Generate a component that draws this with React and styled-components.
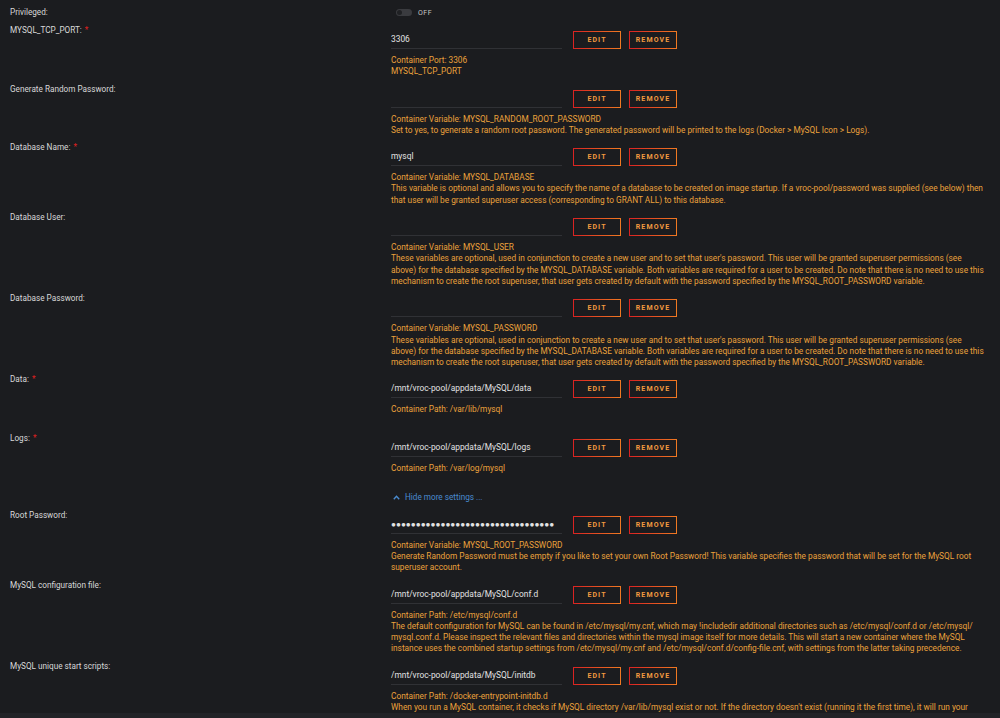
import React from 'react';
import styled, { createGlobalStyle } from 'styled-components';

const GlobalStyle = createGlobalStyle`
    html, body {
        margin: 0;
        padding: 0;
        background: #1b1c1f;
    }
    body {
        font-family: Roboto, "Liberation Sans", Arial, sans-serif;
        font-size: 8.2px;
        color: #d4d4d4;
    }
`

const Page = styled.div`
    padding: 7px 10px 20px 10px;
`

const Row = styled.div`
    display: grid;
    grid-template-columns: 381px 1fr;
    margin-bottom: ${props => props.$gap || 6}px;
`

const Label = styled.div`
    line-height: 11px;
    color: #d8d8d8;
    padding-right: 10px;
`

const Required = styled.span`
    color: #e02020;
    margin-left: 3px;
`

const Value = styled.div`
    display: flex;
    flex-direction: column;
`

const Controls = styled.div`
    display: flex;
    align-items: center;
    margin-top: 6px;
    height: 18px;
`

const Field = styled.div`
    box-sizing: border-box;
    width: 171px;
    height: 18px;
    line-height: 16px;
    border-bottom: 1px solid #303135;
    color: #e2e2e2;
    font-size: ${props => props.$secret ? '8.2px' : '8.4px'};
    white-space: nowrap;
    overflow: hidden;
    margin-right: 11px;
`

const Button = styled.button`
    box-sizing: border-box;
    width: 48px;
    height: 18px;
    margin-right: 8px;
    padding: 0;
    background: transparent;
    border: 1px solid;
    border-image: linear-gradient(90deg, #d92222 0%, #f07a22 100%) 1;
    color: #f29a40;
    font-family: Roboto, "Liberation Sans", Arial, sans-serif;
    font-size: 7px;
    font-weight: bold;
    letter-spacing: 1.1px;
    text-transform: uppercase;
    cursor: pointer;
`

const Description = styled.div`
    margin-top: 6px;
    line-height: 11.3px;
    font-size: 8.3px;
    color: #eba23c;
    white-space: nowrap;
    min-height: 22.6px;
`

const Toggle = styled.div`
    display: flex;
    align-items: center;
    height: 11px;
    padding-left: 5px;
`

const Switch = styled.div`
    position: relative;
    width: 16px;
    height: 7px;
    border-radius: 4px;
    background: #3a3b3f;
    margin-right: 6px;

    &::after {
        content: '';
        position: absolute;
        left: 1px;
        top: 1px;
        width: 5px;
        height: 5px;
        border-radius: 50%;
        background: #202124;
    }
`

const ToggleText = styled.span`
    font-size: 7px;
    color: #c8c8c8;
    letter-spacing: 0.5px;
`

const MoreLink = styled.div`
    display: flex;
    align-items: center;
    gap: 5px;
    line-height: 11px;
    padding-left: 2px;
    color: #4a8bd0;
    margin-bottom: 1px;
`

const Footer = styled.div`
    position: fixed;
    left: 0;
    right: 0;
    bottom: 0;
    height: 5px;
    background: #222327;
`

const ChevronUp = () => (
    <svg width="7" height="5" viewBox="0 0 7 5">
        <path d="M0.8 4.2 L3.5 1.3 L6.2 4.2" stroke="#4a8bd0" strokeWidth="1.4" fill="none"/>
    </svg>
)

const userNote = [
    "These variables are optional, used in conjunction to create a new user and to set that user's password. This user will be granted superuser permissions (see",
    "above) for the database specified by the MYSQL_DATABASE variable. Both variables are required for a user to be created. Do note that there is no need to use this",
    "mechanism to create the root superuser, that user gets created by default with the password specified by the MYSQL_ROOT_PASSWORD variable."
]

const settings = [
    {
        label: 'MYSQL_TCP_PORT:', required: true, value: '3306',
        desc: ['Container Port: 3306', 'MYSQL_TCP_PORT']
    },
    {
        label: 'Generate Random Password:', value: '',
        desc: [
            'Container Variable: MYSQL_RANDOM_ROOT_PASSWORD',
            'Set to yes, to generate a random root password. The generated password will be printed to the logs (Docker > MySQL Icon > Logs).'
        ]
    },
    {
        label: 'Database Name:', required: true, value: 'mysql',
        desc: [
            'Container Variable: MYSQL_DATABASE',
            'This variable is optional and allows you to specify the name of a database to be created on image startup. If a vroc-pool/password was supplied (see below) then',
            'that user will be granted superuser access (corresponding to GRANT ALL) to this database.'
        ]
    },
    {
        label: 'Database User:', value: '',
        desc: ['Container Variable: MYSQL_USER', ...userNote]
    },
    {
        label: 'Database Password:', value: '',
        desc: ['Container Variable: MYSQL_PASSWORD', ...userNote]
    },
    {
        label: 'Data:', required: true, value: '/mnt/vroc-pool/appdata/MySQL/data',
        desc: ['Container Path: /var/lib/mysql', '']
    },
    {
        label: 'Logs:', required: true, value: '/mnt/vroc-pool/appdata/MySQL/logs',
        desc: ['Container Path: /var/log/mysql', '']
    },
]

const advanced = [
    {
        label: 'Root Password:', secret: true, value: '●'.repeat(33),
        desc: [
            'Container Variable: MYSQL_ROOT_PASSWORD',
            'Generate Random Password must be empty if you like to set your own Root Password! This variable specifies the password that will be set for the MySQL root',
            'superuser account.'
        ]
    },
    {
        label: 'MySQL configuration file:', value: '/mnt/vroc-pool/appdata/MySQL/conf.d',
        desc: [
            'Container Path: /etc/mysql/conf.d',
            'The default configuration for MySQL can be found in /etc/mysql/my.cnf, which may !includedir additional directories such as /etc/mysql/conf.d or /etc/mysql/',
            'mysql.conf.d. Please inspect the relevant files and directories within the mysql image itself for more details. This will start a new container where the MySQL',
            'instance uses the combined startup settings from /etc/mysql/my.cnf and /etc/mysql/conf.d/config-file.cnf, with settings from the latter taking precedence.'
        ]
    },
    {
        label: 'MySQL unique start scripts:', value: '/mnt/vroc-pool/appdata/MySQL/initdb',
        desc: [
            'Container Path: /docker-entrypoint-initdb.d',
            "When you run a MySQL container, it checks if MySQL directory /var/lib/mysql exist or not. If the directory doesn't exist (running it the first time), it will run your",
            'entrypoint script which is responsible for creating the MySQL database and any scripts found in /docker-entrypoint-initdb.d.'
        ]
    },
]

const SettingRow = ({ item }) => (
    <Row>
        <Label>
            {item.label}
            {item.required && <Required>*</Required>}
        </Label>
        <Value>
            <Controls>
                <Field $secret={item.secret}>{item.value}</Field>
                <Button type="button">Edit</Button>
                <Button type="button">Remove</Button>
            </Controls>
            <Description>
                {item.desc.map((line, i) => (
                    <React.Fragment key={i}>
                        {i > 0 && <br/>}
                        {line}
                    </React.Fragment>
                ))}
            </Description>
        </Value>
    </Row>
)

const App = () => {
    return (
        <Page>
            <GlobalStyle/>
            <Row $gap={7}>
                <Label>Privileged:</Label>
                <Toggle>
                    <Switch/>
                    <ToggleText>OFF</ToggleText>
                </Toggle>
            </Row>
            {settings.map((v, i) => <SettingRow key={i} item={v}/>)}
            <Row>
                <div/>
                <MoreLink><ChevronUp/>Hide more settings ...</MoreLink>
            </Row>
            {advanced.map((v, i) => <SettingRow key={i} item={v}/>)}
            <Footer/>
        </Page>
    );
};

export default App;
